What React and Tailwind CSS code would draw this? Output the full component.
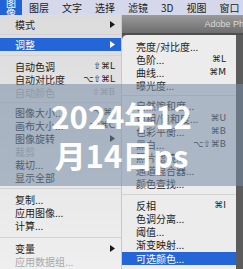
import React from "react";

const Arrow = ({ white }) => (
  <svg width="5" height="7" viewBox="0 0 5 7" className="shrink-0">
    <path d="M0 0 L5 3.5 L0 7 Z" fill={white ? "#ffffff" : "#1a1a1a"} />
  </svg>
);

function Row({ label, sc, arrow, disabled, active, h = "h-[13px]", pl = "pl-[15px]", pr = "pr-[6px]" }) {
  const color = active ? "text-white" : disabled ? "text-[#a9a9a9]" : "text-[#1c1c1c]";
  return (
    <div className={`${h} ${pl} ${pr} flex items-center justify-between ${active ? "bg-[#2465d8]" : ""} ${color}`}>
      <span className="text-[10px] leading-none whitespace-nowrap">{label}</span>
      {sc && (
        <span className="text-[9px] leading-none font-['DejaVu_Sans',sans-serif] whitespace-nowrap">{sc}</span>
      )}
      {arrow && <Arrow white={active} />}
    </div>
  );
}

const Sep = ({ h }) => (
  <div className={`${h} flex items-center`}>
    <div className="h-px w-full bg-[#d3d3d3]" />
  </div>
);

export default function App() {
  const top = ["图层", "文字", "选择", "滤镜", "3D", "视图", "窗口"];
  return (
    <div className="relative w-[243px] h-[269px] overflow-hidden bg-[#e6e6e6] font-['Noto_Sans_CJK_SC','Noto_Sans',sans-serif]">
      {/* top menu bar */}
      <div className="h-[15px] bg-[#d5d8ea] flex items-center text-[10px] leading-none text-[#1a1a1a]">
        <div className="h-full px-[6px] flex items-center bg-[#2262d8] text-white">图像</div>
        {top.map((t) => (
          <div key={t} className="h-full ml-[1px] px-[6px] flex items-center whitespace-nowrap">
            {t}
          </div>
        ))}
      </div>

      <div className="flex h-[254px]">
        {/* left dropdown */}
        <div className="w-[122px] shrink-0 pt-[3px] bg-linear-to-b from-[#dcdcdc] to-[#efefef] border-r border-[#c8c8c8]">
          <Row label="模式" arrow />
          <Sep h="h-[7px]" />
          <Row label="调整" arrow active />
          <Sep h="h-[9px]" />
          <Row label="自动色调" sc="⇧⌘L" />
          <Row label="自动对比度" sc="⌥⇧⌘L" />
          <Row label="自动颜色" sc="⇧⌘B" disabled />
          <Sep h="h-[7px]" />
          <Row label="图像大小..." sc="⌥⌘I" />
          <Row label="画布大小..." sc="⌥⌘C" />
          <Row label="图像旋转" arrow />
          <Row label="裁剪" disabled />
          <Row label="裁切..." />
          <Row label="显示全部" />
          <Sep h="h-[9px]" />
          <Row label="复制..." />
          <Row label="应用图像..." />
          <Row label="计算..." />
          <Sep h="h-[10px]" />
          <Row label="变量" arrow />
          <Row label="应用数据组..." disabled />
        </div>

        {/* right side */}
        <div className="flex-1 flex flex-col min-w-0">
          <div className="h-[20px] shrink-0 bg-linear-to-b from-[#9a9a9a] to-[#6e6e6e] flex items-center justify-end pr-0 border-b-2 border-[#4e4e4e]">
            <span className="text-[9px] leading-none text-[#dadada] font-['Liberation_Sans',sans-serif] whitespace-nowrap -mr-[6px]">
              Adobe Pho
            </span>
          </div>
          <div className="flex flex-1 bg-[#5c5c5c]">
            <div className="w-[114px] shrink-0 bg-[#ececec] rounded-tl-[5px] pt-[5px]">
              <Row label="亮度/对比度..." pl="pl-[14px]" pr="pr-[10px]" />
              <Row label="色阶..." sc="⌘L" pl="pl-[14px]" pr="pr-[10px]" />
              <Row label="曲线..." sc="⌘M" pl="pl-[14px]" pr="pr-[10px]" />
              <Row label="曝光度..." pl="pl-[14px]" pr="pr-[10px]" />
              <Sep h="h-[7px]" />
              <Row label="自然饱和度..." pl="pl-[14px]" pr="pr-[10px]" />
              <Row label="色相/饱和度..." sc="⌘U" pl="pl-[14px]" pr="pr-[10px]" />
              <Row label="色彩平衡..." sc="⌘B" pl="pl-[14px]" pr="pr-[10px]" />
              <Row label="黑白..." sc="⌥⇧⌘B" pl="pl-[14px]" pr="pr-[10px]" />
              <Row label="照片滤镜..." pl="pl-[14px]" pr="pr-[10px]" />
              <Row label="通道混合器..." pl="pl-[14px]" pr="pr-[10px]" />
              <Row label="颜色查找..." pl="pl-[14px]" pr="pr-[10px]" />
              <Sep h="h-[9px]" />
              <Row label="反相" sc="⌘I" pl="pl-[14px]" pr="pr-[10px]" />
              <Row label="色调分离..." pl="pl-[14px]" pr="pr-[10px]" />
              <Row label="阈值..." pl="pl-[14px]" pr="pr-[10px]" />
              <Row label="渐变映射..." pl="pl-[14px]" pr="pr-[10px]" />
              <div className="h-[1px]" />
              <Row label="可选颜色..." active pl="pl-[14px]" pr="pr-[10px]" />
            </div>
          </div>
        </div>
      </div>

      {/* overlay title band */}
      <div className="absolute left-0 right-0 top-[84px] h-[102px] bg-[#778da6]/55 flex flex-col items-center justify-center text-white font-bold text-[31px] leading-[39px] font-['Noto_Sans_CJK_SC','Noto_Sans',sans-serif]">
        <div className="whitespace-nowrap">2024年12</div>
        <div className="whitespace-nowrap">月14日ps</div>
      </div>
    </div>
  );
}
